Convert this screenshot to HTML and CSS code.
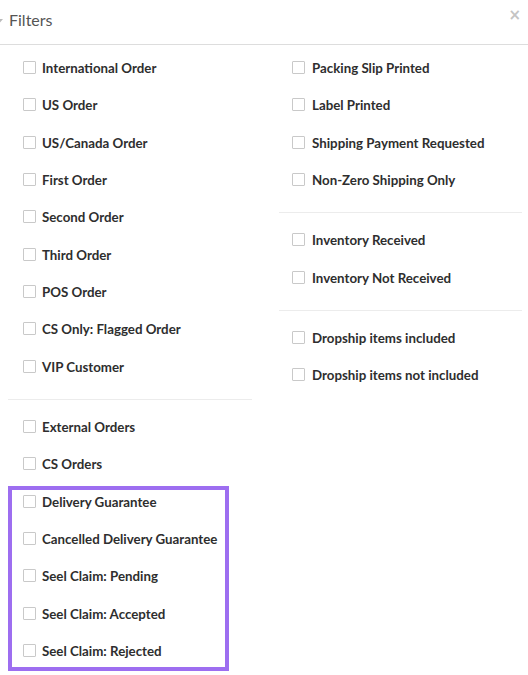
FILE: index.html
```html
<!DOCTYPE html>
<html>
<head>
<meta charset="utf-8">
<link rel="stylesheet" href="styles.css">
</head>
<body>
<div class="modal">
  <div class="header">
    <svg class="hicon" width="10" height="10" viewBox="0 0 10 10"><path d="M0 1h10L6 5.5V9L4 10V5.5z" fill="#bbb"/></svg>
    <span class="title">Filters</span>
    <span class="close">×</span>
  </div>
  <div class="cols">
    <div class="col left">
      <div class="group first">
        <label class="item"><span class="cb"></span>International Order</label>
        <label class="item"><span class="cb"></span>US Order</label>
        <label class="item"><span class="cb"></span>US/Canada Order</label>
        <label class="item"><span class="cb"></span>First Order</label>
        <label class="item"><span class="cb"></span>Second Order</label>
        <label class="item"><span class="cb"></span>Third Order</label>
        <label class="item"><span class="cb"></span>POS Order</label>
        <label class="item"><span class="cb"></span>CS Only: Flagged Order</label>
        <label class="item"><span class="cb"></span>VIP Customer</label>
      </div>
      <div class="group last">
        <label class="item"><span class="cb"></span>External Orders</label>
        <label class="item"><span class="cb"></span>CS Orders</label>
        <div class="highlight">
          <label class="item"><span class="cb"></span>Delivery Guarantee</label>
          <label class="item"><span class="cb"></span>Cancelled Delivery Guarantee</label>
          <label class="item"><span class="cb"></span>Seel Claim: Pending</label>
          <label class="item"><span class="cb"></span>Seel Claim: Accepted</label>
          <label class="item"><span class="cb"></span>Seel Claim: Rejected</label>
        </div>
      </div>
    </div>
    <div class="col right">
      <div class="group first">
        <label class="item"><span class="cb"></span>Packing Slip Printed</label>
        <label class="item"><span class="cb"></span>Label Printed</label>
        <label class="item"><span class="cb"></span>Shipping Payment Requested</label>
        <label class="item"><span class="cb"></span>Non-Zero Shipping Only</label>
      </div>
      <div class="group">
        <label class="item"><span class="cb"></span>Inventory Received</label>
        <label class="item"><span class="cb"></span>Inventory Not Received</label>
      </div>
      <div class="group last">
        <label class="item"><span class="cb"></span>Dropship items included</label>
        <label class="item"><span class="cb"></span>Dropship items not included</label>
      </div>
    </div>
  </div>
</div>
</body>
</html>
```
FILE: styles.css
```css
html, body {
  margin: 0;
  padding: 0;
  background: #fff;
}
body {
  font-family: "Lato", "Open Sans", sans-serif;
  color: #333;
  overflow: hidden;
}
.modal {
  width: 528px;
}
.header {
  height: 44px;
  border-bottom: 1px solid #ddd;
  display: flex;
  align-items: center;
  position: relative;
}
.hicon {
  margin-left: -7px;
  margin-right: 6px;
  margin-top: 2px;
}
.title {
  font-size: 16px;
  color: #555;
  margin-top: -6px;
}
.close {
  position: absolute;
  right: 7px;
  top: 6px;
  font-size: 15px;
  font-weight: bold;
  color: #c4c4c4;
  font-family: "DejaVu Sans", sans-serif;
}
.cols {
  display: flex;
  padding-left: 8px;
  gap: 27px;
}
.col.left {
  width: 244px;
}
.col.right {
  width: 243px;
}
.group {
  padding-top: 8.3px;
  padding-bottom: 13.7px;
  border-bottom: 1px solid #ececec;
}
.group.first {
  padding-top: 4.3px;
}
.group.last {
  border-bottom: none;
}
.item {
  height: 37.33px;
  display: flex;
  align-items: center;
  font-size: 13.3px;
  font-weight: bold;
  color: #2e2e2e;
  white-space: nowrap;
}
.left .item {
  padding-left: 15px;
}
.right .item {
  padding-left: 13px;
}
.cb {
  width: 11px;
  height: 11px;
  border: 1px solid #c9c9c9;
  border-radius: 1px;
  background: #fff;
  margin-right: 7px;
  flex: none;
  margin-top: -1px;
}
.left .cb {
  margin-right: 6px;
}
.highlight {
  position: relative;
  width: 221px;
}
.highlight::after {
  content: "";
  position: absolute;
  left: 0;
  right: 0;
  top: 3px;
  bottom: -1px;
  border: 4px solid #9d6ef0;
  pointer-events: none;
}
```
